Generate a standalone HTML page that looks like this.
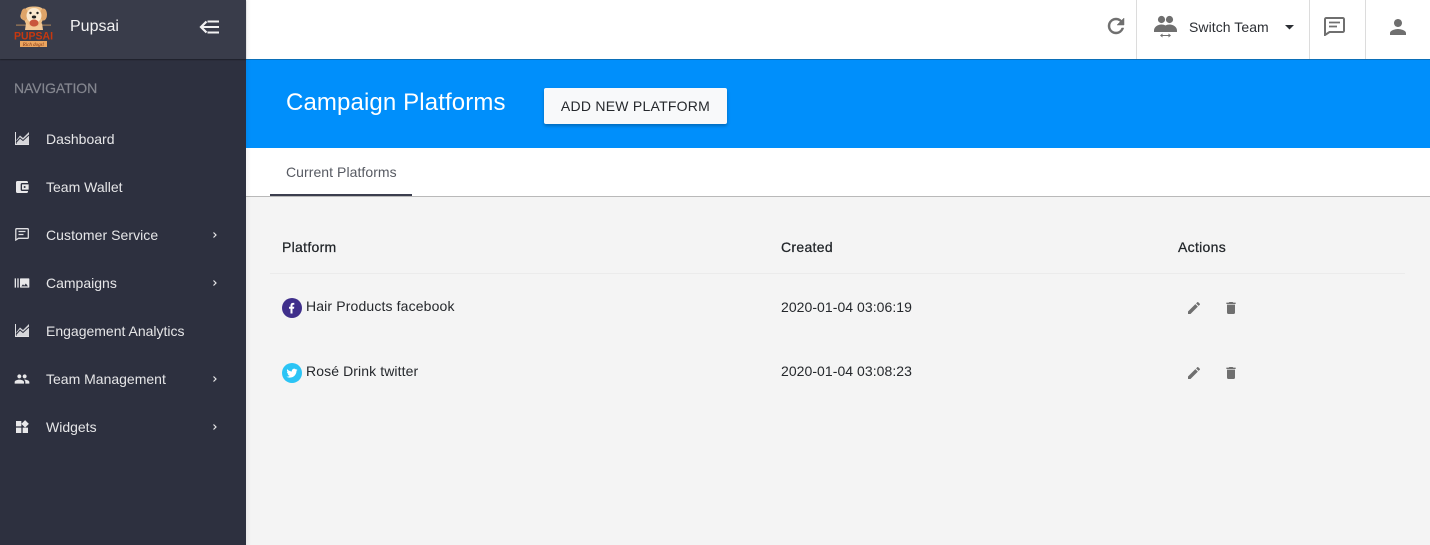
<!DOCTYPE html>
<html><head><meta charset="utf-8">
<style>
*{box-sizing:border-box}
html,body{margin:0;padding:0;width:1430px;height:545px;overflow:hidden;background:#f4f4f4;font-family:"Liberation Sans",Arial,sans-serif;color:#212529}
.a{position:absolute}
.t{position:absolute;white-space:nowrap;line-height:20px;font-size:14px}
#side{left:0;top:0;width:246px;height:545px;background:#2d303f}
#brand{left:0;top:0;width:246px;height:59px;background:#393c4a;box-shadow:0 1px 1px rgba(0,0,0,.35)}
.nav{color:#e6e6e8}
svg{position:absolute;display:block}
.si{fill:#e8e8ea}
.tb{fill:#6f6f6f}
.sep{position:absolute;top:0;width:1px;height:59px;background:#dcdcdc}
.ch{position:absolute;left:212px;width:6px;height:6px}
.th{color:#212529;-webkit-text-stroke:.25px #212529;letter-spacing:.3px}
</style></head><body>

<div class="a" style="left:246px;top:0;width:1184px;height:60px;background:#fff"></div>
<div class="a" style="left:246px;top:59px;width:1184px;height:89px;background:#008ffb;border-top:1px solid #0b6fb8"></div>
<div class="a" style="left:246px;top:148px;width:1184px;height:48px;background:#fff"></div>
<div class="a" style="left:246px;top:196px;width:1184px;height:1px;background:#b9b9b9"></div>
<div class="a" style="left:270px;top:194px;width:142px;height:2px;background:#3b3e4e"></div>

<div class="a" id="side"></div>
<div class="a" style="left:246px;top:0;width:5px;height:545px;background:linear-gradient(90deg,rgba(0,0,0,.05),rgba(0,0,0,0))"></div>
<div class="a" id="brand"></div>

<!-- logo -->
<svg style="left:13px;top:5px" width="44" height="44" viewBox="0 0 44 44">
<path d="M3 19.500h35v1.200H3z" fill="#9a7a58"/>
<path d="M12 4c2-2 5-2.500 9-2.500s7 .5 9 2.500c2.500 1.500 4 5 3.500 8-.4 2-2 3-3.500 2.500L28 19l-1 6H14l-1-6-2-4.500C9.500 15 8 14 7.500 12 7 9 9.500 5.500 12 4z" fill="#efc188"/>
<ellipse cx="11.500" cy="9.500" rx="3.500" ry="6" fill="#dfa468"/>
<ellipse cx="30.500" cy="9.500" rx="3.500" ry="6" fill="#dfa468"/>
<ellipse cx="21" cy="10.500" rx="7.500" ry="7.500" fill="#fbe9cf"/>
<circle cx="17.500" cy="8" r="1.200" fill="#222"/><circle cx="24.500" cy="8" r="1.200" fill="#222"/>
<ellipse cx="21" cy="12" rx="2.200" ry="1.500" fill="#222"/>
<ellipse cx="21" cy="18" rx="4.500" ry="3.500" fill="#c9553c"/>
<path d="M13 18l4 3 4 1 4-1 4-3 1 7H12z" fill="#f3c896"/>
<rect x="7" y="36" width="27" height="6" fill="#eba55f"/>
<text x="20.500" y="41" font-family="Liberation Serif,serif" font-size="5" font-style="italic" text-anchor="middle" fill="#7a2d10">Rich dogs!</text>
<text x="20.500" y="34.500" font-family="Liberation Sans,sans-serif" font-size="11" font-weight="700" text-anchor="middle" fill="#c8380f" textLength="39" lengthAdjust="spacingAndGlyphs">PUPSAI</text>
</svg>

<div class="t" style="left:70px;top:17px;font-size:16px;color:#f2f2f3">Pupsai</div>
<svg style="left:198px;top:18px" width="22" height="18" viewBox="0 0 22 18"><path d="M8.500 3.500 3 9l5.500 5.500" fill="none" stroke="#f2f2f3" stroke-width="2.200"/><path d="M3 9h18M9.500 3.500H21M9.500 14.500H21" stroke="#f2f2f3" stroke-width="2"/></svg>

<div class="t" style="left:14px;top:78px;color:#84868f;-webkit-text-stroke:.2px #84868f;letter-spacing:-.12px">NAVIGATION</div>

<!-- nav icons -->
<svg style="left:15px;top:132px" width="14" height="13" viewBox="0 0 14 13"><path d="M0 0h1v12h13v1H0z" fill="#e0e0e3"/><path d="M1.500 8 5 3.500l3 2.500L14 0v12H1.500z" fill="#d6d6da"/><path d="M1 10.500 5 6l3 2.500L14 3" fill="none" stroke="#2d303f" stroke-width="1"/></svg>
<svg class="si" style="left:14px;top:179px" width="16" height="16" viewBox="0 0 24 24"><path d="M21 18v1c0 1.100-.9 2-2 2H5c-1.110 0-2-.9-2-2V5c0-1.100.89-2 2-2h14c1.100 0 2 .9 2 2v1h-9c-1.110 0-2 .9-2 2v8c0 1.100.89 2 2 2h9zm-9-2h10V8H12v8zm4-2.500c-.83 0-1.500-.67-1.500-1.500s.67-1.500 1.500-1.500 1.500.67 1.500 1.500-.67 1.500-1.500 1.500z"/></svg>
<svg style="left:15px;top:228px" width="14" height="13" viewBox="0 0 14 13"><path d="M1.500.7h11a.8.800 0 0 1 .8.800v8a.8.800 0 0 1-.8.800H3.500L.8 12V1.500a.8.800 0 0 1 .7-.8z" fill="none" stroke="#e0e0e3" stroke-width="1.300"/><path d="M3.500 3.500h7M3.500 6.500h5" stroke="#e0e0e3" stroke-width="1.200"/></svg>
<svg class="si" style="left:14px;top:275px" width="16" height="16" viewBox="0 0 24 24"><path d="M1 5h2v14H1zm4 0h2v14H5zm17 0H10c-.55 0-1 .45-1 1v12c0 .55.45 1 1 1h12c.55 0 1-.45 1-1V6c0-.55-.45-1-1-1zM11 17l2.500-3.150L15.290 16l2.500-3.220L21 17H11z"/></svg>
<svg style="left:15px;top:324px" width="14" height="13" viewBox="0 0 14 13"><path d="M0 0h1v12h13v1H0z" fill="#e0e0e3"/><path d="M1.500 8 5 3.500l3 2.500L14 0v12H1.500z" fill="#d6d6da"/><path d="M1 10.500 5 6l3 2.500L14 3" fill="none" stroke="#2d303f" stroke-width="1"/></svg>
<svg class="si" style="left:14px;top:371px" width="16" height="16" viewBox="0 0 24 24"><path d="M16 11c1.660 0 2.990-1.340 2.990-3S17.660 5 16 5c-1.660 0-3 1.340-3 3s1.340 3 3 3zm-8 0c1.660 0 2.990-1.340 2.990-3S9.660 5 8 5C6.340 5 5 6.340 5 8s1.340 3 3 3zm0 2c-2.330 0-7 1.170-7 3.500V19h14v-2.500c0-2.330-4.670-3.500-7-3.500zm8 0c-.29 0-.62.02-.97.05 1.160.84 1.970 1.970 1.970 3.450V19h6v-2.500c0-2.330-4.670-3.500-7-3.500z"/></svg>
<svg class="si" style="left:14px;top:419px" width="16" height="16" viewBox="0 0 24 24"><path d="M13 13v8h8v-8h-8zM3 21h8v-8H3v8zM3 3v8h8V3H3zm13.660-1.310L11 7.340 16.660 13l5.660-5.660-5.660-5.650z"/></svg>

<div class="t nav" style="left:46px;top:129px">Dashboard</div>
<div class="t nav" style="left:46px;top:177px">Team Wallet</div>
<div class="t nav" style="left:46px;top:225px;letter-spacing:.06px">Customer Service</div>
<div class="t nav" style="left:46px;top:273px">Campaigns</div>
<div class="t nav" style="left:46px;top:321px">Engagement Analytics</div>
<div class="t nav" style="left:46px;top:369px">Team Management</div>
<div class="t nav" style="left:46px;top:417px">Widgets</div>

<svg class="ch" style="top:232px" viewBox="0 0 6 6"><path d="M1.500.5 4 3 1.500 5.500" fill="none" stroke="#e6e6e8" stroke-width="1.200"/></svg>
<svg class="ch" style="top:280px" viewBox="0 0 6 6"><path d="M1.500.5 4 3 1.500 5.500" fill="none" stroke="#e6e6e8" stroke-width="1.200"/></svg>
<svg class="ch" style="top:376px" viewBox="0 0 6 6"><path d="M1.500.5 4 3 1.500 5.500" fill="none" stroke="#e6e6e8" stroke-width="1.200"/></svg>
<svg class="ch" style="top:424px" viewBox="0 0 6 6"><path d="M1.500.5 4 3 1.500 5.500" fill="none" stroke="#e6e6e8" stroke-width="1.200"/></svg>

<!-- top bar -->
<svg class="tb" style="left:1104px;top:14px;stroke:#6f6f6f;stroke-width:.5" width="24" height="24" viewBox="0 0 24 24"><path d="M17.650 6.350C16.200 4.900 14.210 4 12 4c-4.420 0-7.990 3.580-7.990 8s3.570 8 7.990 8c3.730 0 6.840-2.550 7.730-6h-2.080c-.82 2.330-3.040 4-5.650 4-3.310 0-6-2.690-6-6s2.690-6 6-6c1.660 0 3.140.69 4.220 1.780L13 11h7V4l-2.350 2.350z"/></svg>
<div class="sep" style="left:1136px"></div>
<svg class="tb" style="left:1153px;top:13px" width="25" height="26" viewBox="0 0 25 26"><circle cx="8.500" cy="6.500" r="3.600"/><circle cx="16.500" cy="6.500" r="3.600"/><path d="M1 17.500c0-3.500 3.500-6 7.500-6 1.500 0 3 .4 4 1 1-.6 2.500-1 4-1 4 0 7.500 2.500 7.500 6v1.500H1z"/><path d="M9 22.500h7" stroke="#6f6f6f" stroke-width="1"/><path d="M9.500 20.500l-2.500 2 2.500 2zM15.500 20.500l2.500 2-2.500 2z"/></svg>
<div class="t" style="left:1189px;top:17px;color:#2b2e33;letter-spacing:.06px">Switch Team</div>
<svg style="left:1285px;top:25px" width="9" height="5" viewBox="0 0 9 5"><path d="M0 0h9L4.500 4.500z" fill="#2b2e33"/></svg>
<div class="sep" style="left:1309px"></div>
<svg style="left:1324px;top:17px" width="21" height="19" viewBox="0 0 21 19"><path d="M2.300 1h16.400A1.300 1.300 0 0 1 20 2.300v11.400a1.300 1.300 0 0 1-1.300 1.300H5.500L1 18V2.300A1.300 1.300 0 0 1 2.300 1z" fill="none" stroke="#6f6f6f" stroke-width="2"/><path d="M5 5.500h11M5 9.500h8" stroke="#6f6f6f" stroke-width="1.800"/></svg>
<div class="sep" style="left:1365px"></div>
<svg class="tb" style="left:1386px;top:15px" width="24" height="24" viewBox="0 0 24 24"><path d="M12 12c2.210 0 4-1.790 4-4s-1.790-4-4-4-4 1.790-4 4 1.790 4 4 4zm0 2c-2.670 0-8 1.340-8 4v2h16v-2c0-2.660-5.330-4-8-4z"/></svg>

<!-- header -->
<div class="t" style="left:286px;top:89px;font-size:24px;line-height:28px;color:#fff;letter-spacing:.12px">Campaign Platforms</div>
<div class="a" style="left:544px;top:88px;width:183px;height:36px;background:#f8f9fa;border-radius:2px;box-shadow:0 2px 3px rgba(0,0,0,.25);text-align:center;line-height:36px;font-size:14px;letter-spacing:.25px;color:#25282c">ADD NEW PLATFORM</div>
<div class="t" style="left:286px;top:162px;color:#575a62;letter-spacing:.06px">Current Platforms</div>

<!-- table -->
<div class="t th" style="left:282px;top:237px">Platform</div>
<div class="t th" style="left:781px;top:237px">Created</div>
<div class="t th" style="left:1178px;top:237px">Actions</div>
<div class="a" style="left:270px;top:273px;width:1135px;height:1px;background:#ebebeb"></div>

<svg style="left:282px;top:298px" width="20" height="20" viewBox="0 0 20 20"><circle cx="10" cy="10" r="10" fill="#3f2f8b"/><path d="M8.500 15.500V10.700H7V8.800h1.500V7.500c0-1.700 1-2.600 2.500-2.600h1.300v1.900h-.9c-.7 0-.9.300-.9.900v1.100h1.800l-.3 1.900h-1.500v4.800z" fill="#fff"/></svg>
<div class="t" style="left:306px;top:296px;color:#25282c;letter-spacing:.14px">Hair Products facebook</div>
<div class="t" style="left:781px;top:297px;color:#25282c;letter-spacing:.05px">2020-01-04 03:06:19</div>

<svg style="left:282px;top:363px" width="20" height="20" viewBox="0 0 20 20"><circle cx="10" cy="10" r="10" fill="#2bc4f5"/><path d="M15.500 6.700c-.4.200-.8.300-1.300.4.500-.3.800-.7 1-1.200-.4.300-.9.400-1.400.5a2.300 2.300 0 0 0-3.900 2.100C8 8.400 6.300 7.500 5.200 6.100c-.6 1-.3 2.300.7 3-.4 0-.7-.1-1-.3 0 1.100.8 2.100 1.800 2.300-.3.100-.7.100-1 0 .3.900 1.100 1.600 2.100 1.600-.9.700-2.100 1-3.300.9 1 .7 2.200 1 3.500 1 4.200 0 6.600-3.600 6.500-6.800.4-.3.800-.7 1-1.100z" fill="#fff"/></svg>
<div class="t" style="left:306px;top:361px;color:#25282c;letter-spacing:.1px">Rosé Drink twitter</div>
<div class="t" style="left:781px;top:361px;color:#25282c;letter-spacing:.05px">2020-01-04 03:08:23</div>

<svg fill="#6f6f6f" style="left:1186px;top:300px" width="16" height="16" viewBox="0 0 24 24"><path d="M3 17.250V21h3.750L17.810 9.940l-3.750-3.750L3 17.250zM20.710 7.040c.39-.39.39-1.020 0-1.410l-2.340-2.340c-.39-.39-1.020-.39-1.410 0l-1.830 1.830 3.750 3.750 1.830-1.830z"/></svg>
<svg fill="#6f6f6f" style="left:1222.500px;top:299.500px" width="16" height="16" viewBox="0 0 24 24"><path d="M6 19c0 1.100.9 2 2 2h8c1.100 0 2-.9 2-2V7H6v12zM19 4h-3.500l-1-1h-5l-1 1H5v2h14V4z"/></svg>
<svg fill="#6f6f6f" style="left:1186px;top:365px" width="16" height="16" viewBox="0 0 24 24"><path d="M3 17.250V21h3.750L17.810 9.940l-3.750-3.750L3 17.250zM20.710 7.040c.39-.39.39-1.020 0-1.410l-2.340-2.340c-.39-.39-1.020-.39-1.410 0l-1.830 1.830 3.750 3.750 1.830-1.830z"/></svg>
<svg fill="#6f6f6f" style="left:1222.500px;top:364.500px" width="16" height="16" viewBox="0 0 24 24"><path d="M6 19c0 1.100.9 2 2 2h8c1.100 0 2-.9 2-2V7H6v12zM19 4h-3.500l-1-1h-5l-1 1H5v2h14V4z"/></svg>

</body></html>
